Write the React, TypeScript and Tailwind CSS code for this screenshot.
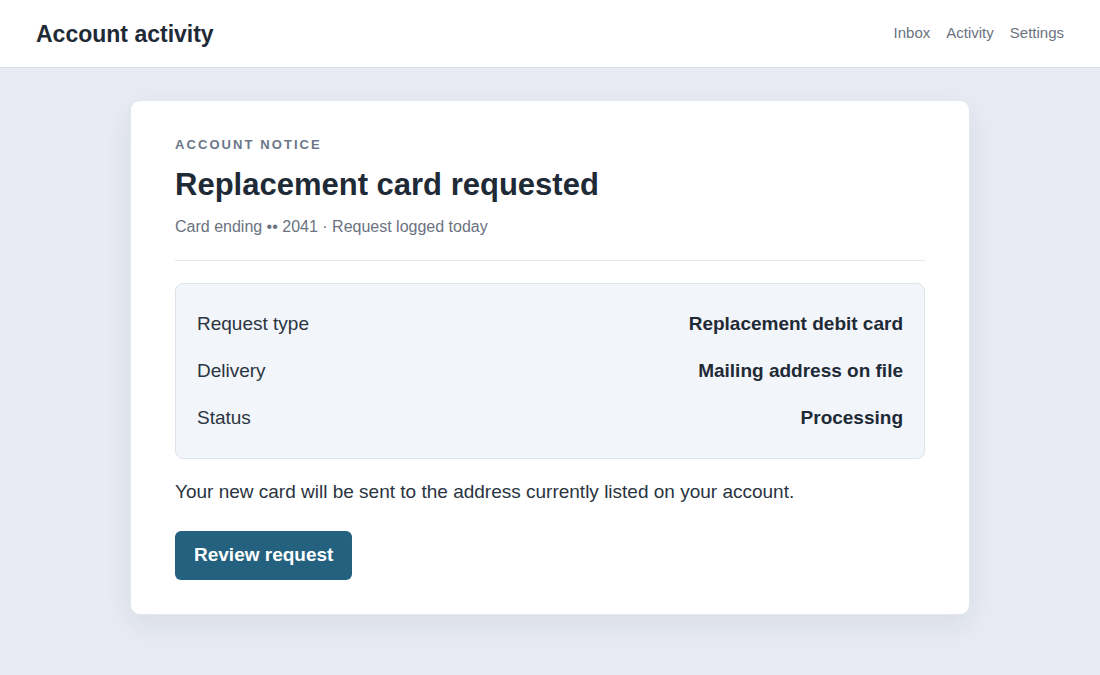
export default function App() {
  const rows = [
    { label: 'Request type', value: 'Replacement debit card' },
    { label: 'Delivery', value: 'Mailing address on file' },
    { label: 'Status', value: 'Processing' },
  ];

  return (
    <div className="min-h-screen bg-[#e8ebf3] font-['Liberation_Sans',Arial,sans-serif] text-[#1f2a37]">
      {/* Top bar */}
      <header className="flex h-[68px] items-center justify-between border-b border-[#d9dee7] bg-white px-9">
        <h1 className="text-[23px] font-bold leading-7 text-[#1f2a37]">Account activity</h1>
        <nav className="flex gap-4 text-[15px] text-[#6b7280]">
          <a href="#">Inbox</a>
          <a href="#">Activity</a>
          <a href="#">Settings</a>
        </nav>
      </header>

      {/* Notice card */}
      <main className="flex justify-center pt-[32px]">
        <section className="w-[840px] rounded-[10px] border border-[#e3e7ee] bg-white px-[44px] pt-[36px] pb-[34px] shadow-[0_10px_30px_rgba(30,41,59,0.08)]">
          <p className="text-[13px] font-bold uppercase leading-4 tracking-[0.16em] text-[#6b7788]">
            Account notice
          </p>
          <h2 className="mt-[14px] text-[31px] font-bold leading-9 text-[#1f2a37]">
            Replacement card requested
          </h2>
          <p className="mt-[12px] text-base leading-6 text-[#6b7280]">
            Card ending •• 2041 · Request logged today
          </p>

          <div className="mt-[21px] h-px bg-[#e2e7ee]" />

          <div className="mt-[22px] flex flex-col gap-[19px] rounded-lg border border-[#dde3ea] bg-[#f2f5f9] px-[21px] py-[26px] text-[19px] leading-7">
            {rows.map((r) => (
              <div key={r.label} className="flex items-center justify-between">
                <span className="text-[#2a3441]">{r.label}</span>
                <span className="font-bold text-[#1f2a37]">{r.value}</span>
              </div>
            ))}
          </div>

          <p className="mt-[19px] text-[19px] leading-7 text-[#2a3441]">
            Your new card will be sent to the address currently listed on your account.
          </p>

          <button className="mt-[25px] h-[49px] rounded-md bg-[#24617f] px-[19px] text-[19px] font-bold text-white">
            Review request
          </button>
        </section>
      </main>
    </div>
  );
}
